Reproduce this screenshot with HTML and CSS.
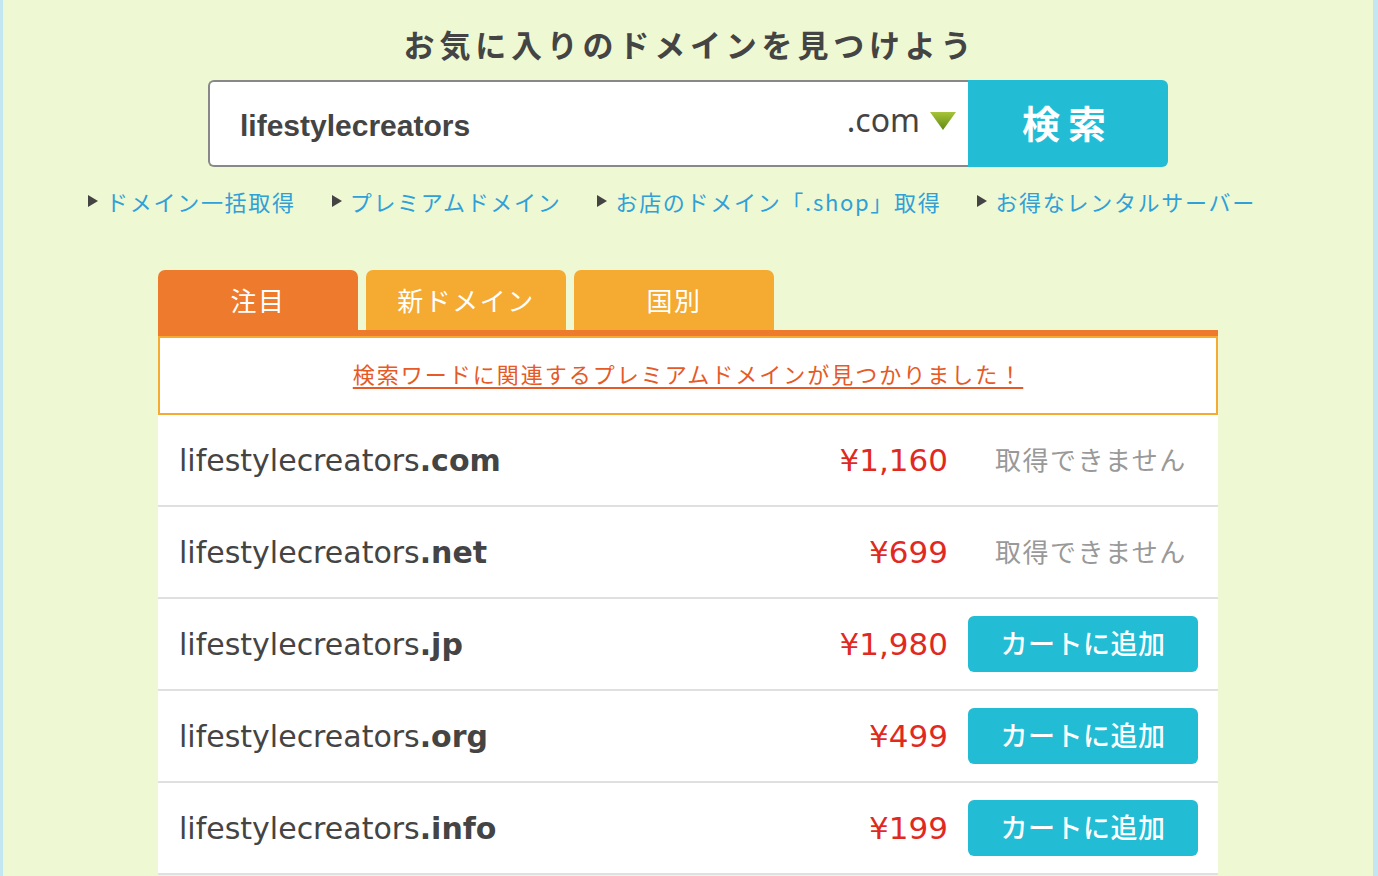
FILE: index.html
```html
<!DOCTYPE html>
<html lang="ja">
<head>
<meta charset="utf-8">
<title>ドメイン検索</title>
<link rel="stylesheet" href="styles.css">
</head>
<body>
<div class="page">
  <h1 class="title">お気に入りのドメインを見つけよう</h1>
  <form class="search">
    <div class="search-box">
      <span class="search-word">lifestylecreators</span>
      <span class="tld-select">.com<svg class="tld-arrow" width="26" height="18" viewBox="0 0 26 18"><defs><linearGradient id="g" x1="0" y1="0" x2="0" y2="1"><stop offset="0" stop-color="#a7c43a"/><stop offset="1" stop-color="#5f8a12"/></linearGradient></defs><path d="M0 0 H26 L13 18 Z" fill="url(#g)"/></svg></span>
    </div>
    <button type="button" class="search-btn">検索</button>
  </form>
  <ul class="links">
    <li><span class="tri"></span>ドメイン一括取得</li>
    <li><span class="tri"></span>プレミアムドメイン</li>
    <li><span class="tri"></span>お店のドメイン「.shop」取得</li>
    <li><span class="tri"></span>お得なレンタルサーバー</li>
  </ul>
  <div class="panel">
    <div class="tabs">
      <div class="tab active">注目</div>
      <div class="tab">新ドメイン</div>
      <div class="tab">国別</div>
    </div>
    <div class="notice"><a href="#">検索ワードに関連するプレミアムドメインが見つかりました！</a></div>
    <div class="results">
      <div class="row"><span class="domain">lifestylecreators<b>.com</b></span><span class="price">¥1,160</span><span class="na">取得できません</span></div>
      <div class="row"><span class="domain">lifestylecreators<b>.net</b></span><span class="price">¥699</span><span class="na">取得できません</span></div>
      <div class="row"><span class="domain">lifestylecreators<b>.jp</b></span><span class="price">¥1,980</span><button type="button" class="cart">カートに追加</button></div>
      <div class="row"><span class="domain">lifestylecreators<b>.org</b></span><span class="price">¥499</span><button type="button" class="cart">カートに追加</button></div>
      <div class="row"><span class="domain">lifestylecreators<b>.info</b></span><span class="price">¥199</span><button type="button" class="cart">カートに追加</button></div>
    </div>
  </div>
</div>
</body>
</html>
```
FILE: styles.css
```css
* { box-sizing: border-box; }
html, body { margin: 0; padding: 0; height: 100%; }
body {
  background: #c3e6f2;
  font-family: "Noto Sans CJK JP", "Noto Sans", sans-serif;
  overflow: hidden;
}
.page {
  margin: 0 5px 0 3px;
  min-height: 876px;
  background: #eef8d2;
  display: flex;
  flex-direction: column;
  align-items: center;
  padding-top: 22px;
}
.title {
  margin: 0;
  font-size: 31px;
  line-height: 44px;
  font-weight: 700;
  color: #444;
  letter-spacing: 4.8px;
  padding-left: 4px;
}
.search {
  display: flex;
  margin-top: 14px;
  height: 87px;
}
.search-box {
  width: 760px;
  background: #fff;
  border: 2px solid #888;
  border-right: none;
  border-radius: 6px 0 0 6px;
  display: flex;
  align-items: center;
  justify-content: space-between;
  padding: 0 12px 0 30px;
}
.search-word {
  font-family: "Liberation Sans", Arial, sans-serif;
  font-weight: 700;
  font-size: 30px;
  color: #444;
  padding-top: 4px;
}
.tld-select {
  font-family: "Noto Sans", sans-serif;
  font-size: 32px;
  color: #444;
  display: flex;
  align-items: center;
  gap: 10px;
  margin-top: -8px;
}
.tld-arrow { margin-top: 2px; }
.search-btn {
  width: 200px;
  border: none;
  background: #22bcd5;
  color: #fff;
  border-radius: 0 6px 6px 0;
  font-family: "Noto Sans CJK JP", sans-serif;
  font-size: 38px;
  font-weight: 700;
  letter-spacing: 8px;
  padding: 0 0 4px 0;
}
.links {
  list-style: none;
  margin: 19px 32px 0 0;
  padding: 0;
  display: flex;
  gap: 36px;
  font-size: 22px;
  color: #2fa0d8;
  letter-spacing: 1.7px;
  line-height: 30px;
}
.links li { display: flex; align-items: center; }
.tri {
  width: 0; height: 0;
  border-left: 10px solid #444;
  border-top: 6px solid transparent;
  border-bottom: 6px solid transparent;
  margin-right: 8px;
}
.panel {
  width: 1060px;
  margin-top: 54px;
}
.tabs {
  display: flex;
  gap: 8px;
  height: 60px;
}
.tab {
  width: 200px;
  background: #f5aa32;
  color: #fff;
  border-radius: 7px 7px 0 0;
  font-size: 26px;
  letter-spacing: 1.5px;
  display: flex;
  align-items: center;
  justify-content: center;
  padding-bottom: 2px;
}
.tab.active { background: #ee7b2d; }
.notice {
  border-top: 6px solid #ee7b2d;
  background: #fff;
  height: 85px;
  display: flex;
  align-items: center;
  justify-content: center;
  box-shadow: inset 0 0 0 2px #f5aa32;
  padding-bottom: 6px;
}
.notice a {
  color: #e55a26;
  font-size: 22px;
  letter-spacing: 2px;
  text-decoration: underline;
  text-underline-offset: 4px;
}
.results { background: #fff; }
.row {
  height: 92px;
  border-bottom: 2px solid #e0e0e0;
  display: flex;
  align-items: center;
  padding: 0 20px 0 21px;
}
.domain {
  flex: 1;
  font-family: "DejaVu Sans", sans-serif;
  font-size: 30px;
  color: #444;
}
.domain b { font-weight: 700; }
.price {
  font-family: "DejaVu Sans", sans-serif;
  font-size: 31px;
  color: #e12a1f;
  margin-right: 20px;
}
.na {
  width: 230px;
  font-size: 26px;
  color: #999;
  letter-spacing: 1.5px;
  padding-left: 27px;
  padding-bottom: 4px;
}
.cart {
  width: 230px;
  height: 56px;
  border: none;
  border-radius: 6px;
  background: #22bcd5;
  color: #fff;
  font-family: "Noto Sans CJK JP", sans-serif;
  font-size: 27px;
  font-weight: 500;
  letter-spacing: 0.5px;
  padding: 0 0 4px;
}
```
